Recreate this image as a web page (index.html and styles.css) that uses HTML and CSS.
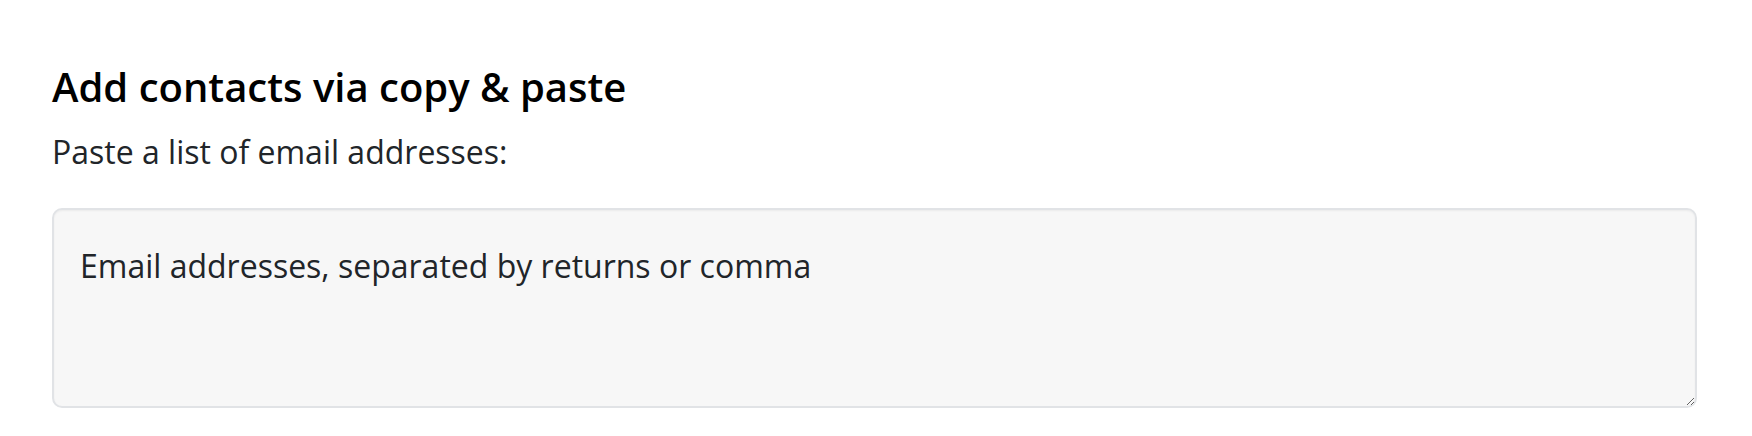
FILE: index.html
```html
<!DOCTYPE html>
<html>
<head>
<meta charset="utf-8">
<link rel="stylesheet" href="styles.css">
</head>
<body>
<section class="panel">
  <h2 class="title">Add contacts via copy &amp; paste</h2>
  <label class="label" for="emails">Paste a list of email addresses:</label>
  <textarea id="emails" class="input" placeholder="Email addresses, separated by returns or comma"></textarea>
</section>
</body>
</html>
```

FILE: styles.css
```css
html, body {
  margin: 0;
  padding: 0;
  background: #ffffff;
}
body {
  font-family: "Open Sans", "Noto Sans", sans-serif;
}
.panel {
  padding: 60px 55px 0 52px;
  display: flex;
  flex-direction: column;
}
.title {
  margin: 0;
  font-size: 40px;
  font-weight: 600;
  line-height: 54px;
  color: #000;
}
.label {
  margin-top: 16px;
  font-size: 32px;
  line-height: 44px;
  color: #212529;
}
.input {
  margin-top: 34px;
  box-sizing: border-box;
  width: 100%;
  height: 200px;
  padding: 34px 26px;
  border: 2px solid #e1e3e6;
  border-radius: 10px;
  background: #f7f7f7;
  box-shadow: inset 0 1px 2px rgba(0, 0, 0, 0.05);
  font-family: "Open Sans", "Noto Sans", sans-serif;
  font-size: 32px;
  line-height: 44px;
  color: #212529;
  resize: vertical;
  outline: none;
}
.input::placeholder {
  color: #212529;
  opacity: 1;
}
```
